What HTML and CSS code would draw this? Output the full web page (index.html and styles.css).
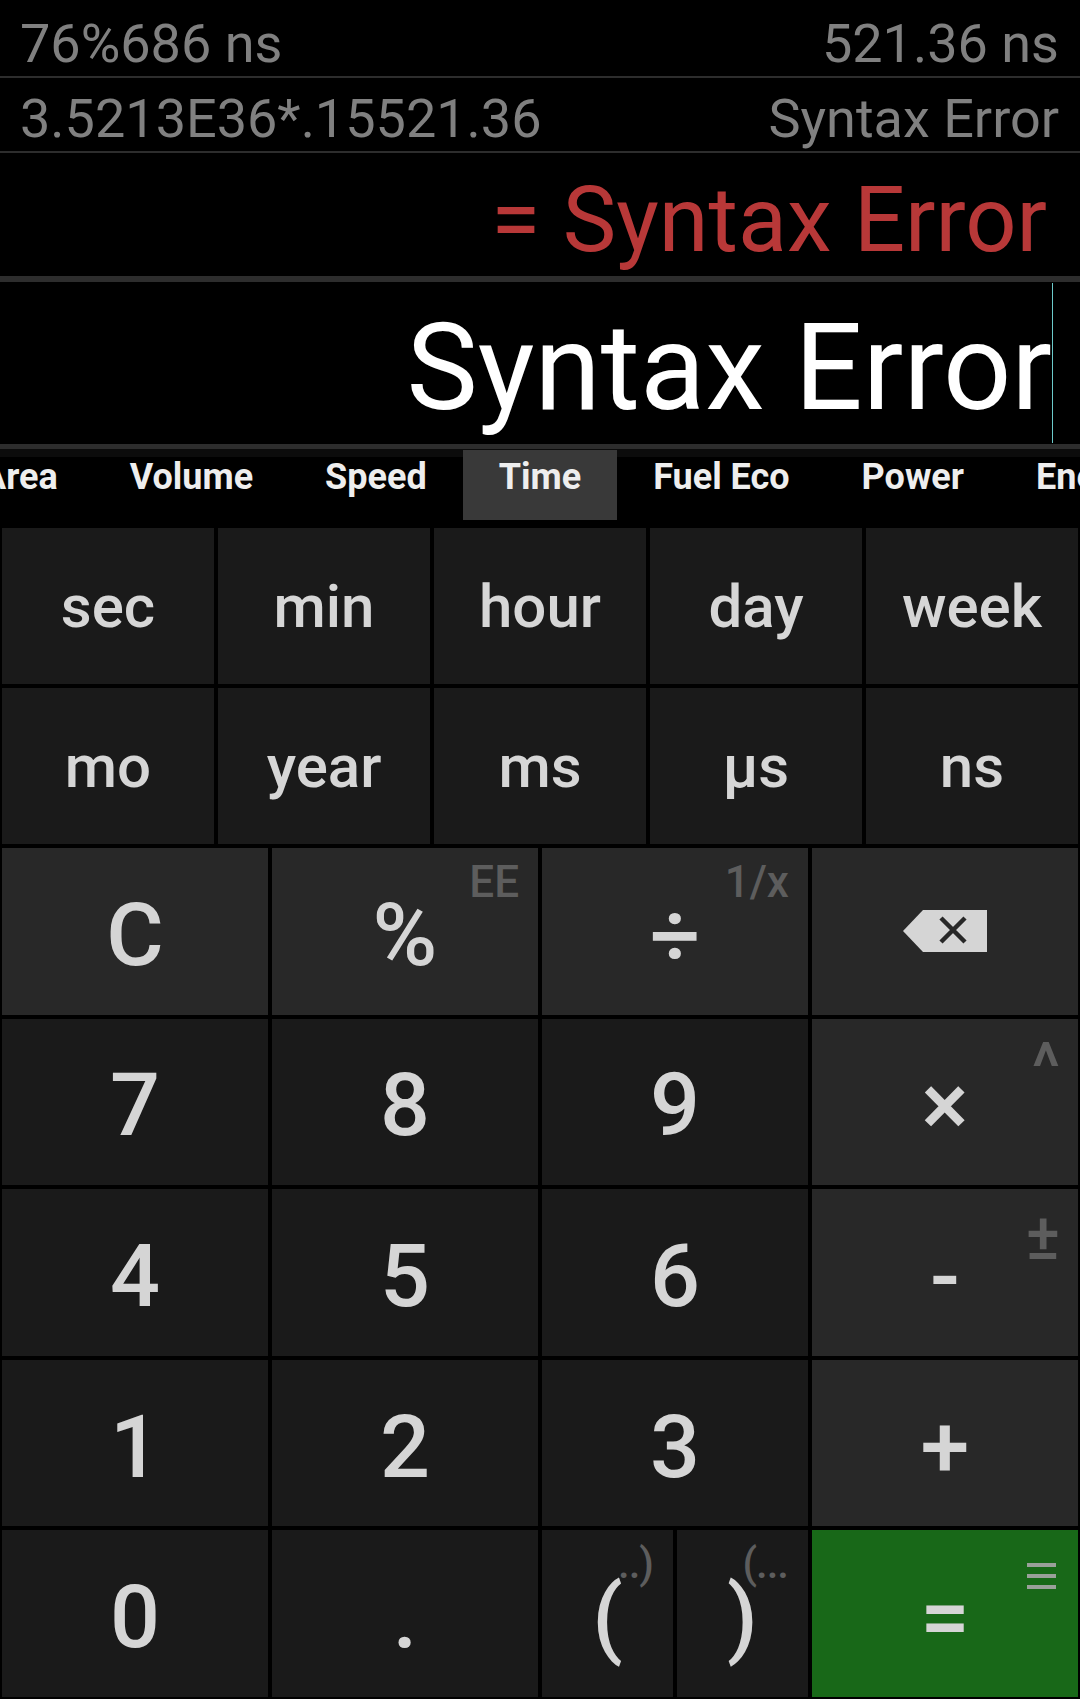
FILE: index.html
```html
<!DOCTYPE html>
<html lang="en">
<head>
<meta charset="utf-8">
<title>Calculator</title>
<link rel="stylesheet" href="styles.css">
</head>
<body>
<div class="screen">
  <div class="display">
    <div class="hist r1"><span>76%686 ns</span><span>521.36 ns</span></div>
    <div class="sep thin"></div>
    <div class="hist r2"><span>3.5213E36*.15521.36</span><span>Syntax Error</span></div>
    <div class="sep thin"></div>
    <div class="result">= Syntax Error</div>
    <div class="sep thick"></div>
    <div class="input"><span class="expr">Syntax Error</span><span class="cursor"></span></div>
    <div class="sep mid"></div>
  </div>

  <div class="tabs">
    <div class="tab-track">
      <div class="tab">Area</div>
      <div class="tab">Volume</div>
      <div class="tab">Speed</div>
      <div class="tab active">Time</div>
      <div class="tab">Fuel Eco</div>
      <div class="tab">Power</div>
      <div class="tab">Energy</div>
    </div>
  </div>

  <div class="units">
    <div class="ukey">sec</div>
    <div class="ukey">min</div>
    <div class="ukey">hour</div>
    <div class="ukey">day</div>
    <div class="ukey">week</div>
    <div class="ukey">mo</div>
    <div class="ukey">year</div>
    <div class="ukey">ms</div>
    <div class="ukey">μs</div>
    <div class="ukey">ns</div>
  </div>

  <div class="pad">
    <div class="key op">C</div>
    <div class="key op">%<span class="alt">EE</span></div>
    <div class="key op">÷<span class="alt">1/x</span></div>
    <div class="key op icon">
      <svg class="bksp" width="84" height="42" viewBox="0 0 84 42">
        <polygon points="0,21 20,0 84,0 84,42 20,42" fill="#d5d5d5"/>
        <path d="M38 8 L62 32 M62 8 L38 32" stroke="#282828" stroke-width="4.5" fill="none"/>
      </svg>
    </div>

    <div class="key">7</div>
    <div class="key">8</div>
    <div class="key">9</div>
    <div class="key op">×<span class="alt caret">^</span></div>

    <div class="key">4</div>
    <div class="key">5</div>
    <div class="key">6</div>
    <div class="key op">-<span class="alt pm">±</span></div>

    <div class="key">1</div>
    <div class="key">2</div>
    <div class="key">3</div>
    <div class="key op">+</div>

    <div class="key">0</div>
    <div class="key">.</div>
    <div class="pair">
      <div class="key">(<span class="alt sup sup-l">..)</span></div>
      <div class="key">)<span class="alt sup sup-r">(...</span></div>
    </div>
    <div class="key eq">=
      <svg class="menu" width="29" height="26" viewBox="0 0 29 26">
        <rect x="0" y="0" width="29" height="4" fill="#9aa09a"/>
        <rect x="0" y="11" width="29" height="4" fill="#9aa09a"/>
        <rect x="0" y="22" width="29" height="4" fill="#9aa09a"/>
      </svg>
    </div>
  </div>
</div>
</body>
</html>
```

FILE: styles.css
```css
html, body {
  margin: 0;
  padding: 0;
  background: #000;
}

body {
  font-family: Roboto, "Noto Sans", "Liberation Sans", sans-serif;
}

.screen {
  width: 1080px;
  height: 1699px;
  overflow: hidden;
  background: #000;
}

/* ---------- display ---------- */
.hist {
  display: flex;
  justify-content: space-between;
  box-sizing: border-box;
  padding-left: 20px;
  padding-right: 21px;
  font-size: 54px;
  line-height: 65px;
  color: #808080;
  white-space: nowrap;
}

.r1 {
  height: 76px;
  padding-top: 11px;
}

.r2 {
  height: 73px;
  padding-top: 8px;
}

.sep {
  background: #2d2d2d;
}

.sep.thin {
  height: 2px;
}

.sep.thick {
  height: 6px;
}

.sep.mid {
  height: 5px;
}

.result {
  height: 123px;
  box-sizing: border-box;
  padding: 12px 33px 0 0;
  font-size: 90px;
  line-height: 111px;
  color: #b83838;
  text-align: right;
  white-space: nowrap;
}

.input {
  height: 162px;
  display: flex;
  justify-content: flex-end;
  padding-right: 27px;
}

.expr {
  display: block;
  padding-top: 11px;
  font-size: 120px;
  line-height: 151px;
  color: #fff;
  white-space: nowrap;
}

.cursor {
  width: 1px;
  margin: 1px 0;
  background: #6ccaca;
}

/* ---------- tabs ---------- */
.tabs {
  height: 71px;
  box-sizing: border-box;
  padding-top: 1px;
  overflow: hidden;
  background: linear-gradient(#0c0c0c 0, #0c0c0c 8px, #000 8px);
}

.tab-track {
  display: flex;
  margin-left: -54px;
}

.tab {
  flex: none;
  height: 70px;
  box-sizing: border-box;
  padding: 0 36px 16px;
  font-size: 36px;
  line-height: 54px;
  font-weight: 700;
  color: #eeeeee;
  white-space: nowrap;
}

.tab.active {
  background: #393939;
}

/* ---------- unit keys ---------- */
.units {
  display: grid;
  grid-template-columns: repeat(5, 1fr);
  grid-auto-rows: 156px;
  gap: 4px;
  padding: 0 2px;
  margin-top: 8px;
}

.ukey {
  display: flex;
  align-items: center;
  justify-content: center;
  background: #1a1a1a;
  color: #d6d6d6;
  font-size: 60px;
  font-weight: 500;
}

/* ---------- main pad ---------- */
.pad {
  display: grid;
  grid-template-columns: repeat(4, 1fr);
  grid-template-rows: repeat(5, 1fr);
  gap: 4px;
  padding: 0 2px;
  margin-top: 4px;
  height: 849px;
}

.pair {
  display: grid;
  grid-template-columns: 1fr 1fr;
  gap: 4px;
}

.key {
  position: relative;
  display: flex;
  align-items: center;
  justify-content: center;
  box-sizing: border-box;
  padding-top: 6px;
  background: #1a1a1a;
  color: #d5d5d5;
  font-size: 88px;
  font-weight: 500;
}

.key.op {
  background: #282828;
}

.key.eq {
  background: #186818;
}

.key.icon {
  padding-top: 0;
}

.alt {
  position: absolute;
  top: 12px;
  right: 19px;
  font-size: 44px;
  line-height: 1;
  font-weight: 500;
  color: #5d5d5d;
}

.alt.caret {
  top: 16px;
  right: 18px;
  font-size: 66px;
  font-weight: 500;
}

.alt.pm {
  top: 17px;
  right: 18px;
  font-size: 64px;
  font-weight: 500;
}

.alt.sup {
  top: 13px;
  right: 20px;
  font-size: 42px;
  font-weight: 500;
  letter-spacing: -1px;
}

.menu {
  position: absolute;
  top: 33px;
  right: 22px;
}
```
